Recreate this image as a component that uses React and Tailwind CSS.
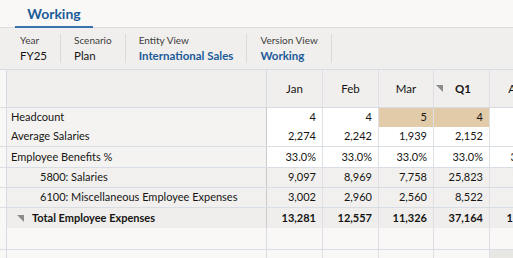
import React from 'react'

const font = { fontFamily: 'Lato, "Noto Sans", sans-serif' }

function Tri({ className }) {
    return (
        <svg width="7" height="7" viewBox="0 0 7 7" className={className}>
            <polygon points="0,0 7,0 7,7" fill="#8c8c8c" />
        </svg>
    )
}

const povItems = [
    { label: 'Year', value: 'FY25' },
    { label: 'Scenario', value: 'Plan' },
    { label: 'Entity View', value: 'International Sales', link: true },
    { label: 'Version View', value: 'Working', link: true },
]

const cols = [
    { name: 'Jan', w: 'w-[56px]', pr: 'pr-[6px]' },
    { name: 'Feb', w: 'w-[56px]', pr: 'pr-[6px]' },
    { name: 'Mar', w: 'w-[55px]', pr: 'pr-[6px]' },
    { name: 'Q1', w: 'w-[56px]', pr: 'pr-[6px]', bold: true },
    { name: 'Apr', w: 'w-[56px]', pr: 'pr-[4px]' },
]

const rows = [
    { label: 'Headcount', vals: ['4', '4', '5', '4', '4'], h: 'h-[19px]', labelBg: 'bg-[#f4f3f1]', cellBg: 'bg-white', tan: [2, 3] },
    { label: 'Average Salaries', vals: ['2,274', '2,242', '1,939', '2,152', '2,263'], h: 'h-[20px]', labelBg: 'bg-[#f4f3f1]', cellBg: 'bg-white', border: true },
    { label: 'Employee Benefits %', vals: ['33.0%', '33.0%', '33.0%', '33.0%', '33.0%'], h: 'h-[21px]', labelBg: 'bg-[#f4f3f1]', cellBg: 'bg-white', border: true },
    { label: '5800: Salaries', vals: ['9,097', '8,969', '7,758', '25,823', '9,041'], h: 'h-[20px]', labelBg: 'bg-[#f1f0ee]', cellBg: 'bg-[#f1f0ee]', border: true, indent: true },
    { label: '6100: Miscellaneous Employee Expenses', vals: ['3,002', '2,960', '2,560', '8,522', '2,983'], h: 'h-[20px]', labelBg: 'bg-[#f1f0ee]', cellBg: 'bg-[#f1f0ee]', border: true, indent: true },
    { label: 'Total Employee Expenses', vals: ['13,281', '12,557', '11,326', '37,164', '13,171'], h: 'h-[20px]', labelBg: 'bg-[#efeeec]', cellBg: 'bg-[#efeeec]', bold: true, total: true },
]

export default function App() {
    return (
        <div className="w-[513px] h-[258px] overflow-hidden bg-[#f9f8f6] text-[#161513]" style={font}>
            {/* tab bar */}
            <div className="h-[28px] border-b border-[#dedcd9] flex">
                <div className="ml-[15px] w-[78px] h-[28px] border-b-2 border-[#3a72ae] flex items-center justify-center text-[14px] font-bold text-[#1c5b99]">
                    Working
                </div>
            </div>

            {/* POV bar */}
            <div className="h-[42px] bg-[#f1efed] border-b border-[#d6dce2] flex items-center pl-[7px]">
                {povItems.map((item, i) => (
                    <div key={i} className="px-[13px] h-[29px] border-r border-[#dcdad7] flex flex-col justify-center gap-[3px]">
                        <div className="text-[10px] leading-[12px] text-[#3c3c3c] whitespace-nowrap">{item.label}</div>
                        <div className={`text-[11.5px] leading-[14px] whitespace-nowrap ${item.link ? 'font-bold text-[#1c5b99]' : ''}`}>{item.value}</div>
                    </div>
                ))}
            </div>

            {/* grid header */}
            <div className="flex h-[38px] border-b border-[#d6dce2]">
                <div className="w-[7px] shrink-0 border-r border-[#d6dce2]"></div>
                <div className="w-[260px] shrink-0 border-r border-[#d6dce2] bg-[#f1efed]"></div>
                {cols.map((c, i) => (
                    <div key={i} className={`${c.w} shrink-0 border-r border-[#dde1e6] bg-[#f1efed] flex items-center text-[11.5px] ${c.bold ? 'font-bold justify-start pl-[2px] gap-[12px]' : 'justify-center'}`}>
                        {c.bold && <Tri />}
                        <span>{c.name}</span>
                    </div>
                ))}
            </div>

            {/* grid rows */}
            {rows.map((r, ri) => (
                <div key={ri} className={`flex ${r.h} ${r.border ? 'border-b border-[#d9dee4]' : ''} text-[11px] ${r.bold ? 'font-bold' : ''}`}>
                    <div className="w-[7px] shrink-0 border-r border-[#d6dce2]"></div>
                    <div className={`w-[260px] shrink-0 border-r border-[#c9cccf] ${r.labelBg} flex items-center whitespace-nowrap ${r.indent ? 'pl-[33px]' : r.total ? 'pl-[10px]' : 'pl-[4px]'}`}>
                        {r.total && <Tri className="mr-[8px]" />}
                        {r.label}
                    </div>
                    {r.vals.map((v, vi) => (
                        <div key={vi} className={`${cols[vi].w} ${cols[vi].pr} shrink-0 border-r border-[#dde1e6] flex items-center justify-end whitespace-nowrap ${r.tan && r.tan.includes(vi) ? 'bg-[#e1cba9]' : r.cellBg}`}>
                            {v}
                        </div>
                    ))}
                </div>
            ))}

            <div className="flex h-[22px] border-b border-[#d9dee4]">
                <div className="w-[7px] shrink-0 border-r border-[#d6dce2]"></div>
                <div className="w-[260px] shrink-0 border-r border-[#d6dce2]"></div>
                {cols.map((c, i) => (
                    <div key={i} className={`${c.w} shrink-0 border-r border-[#dde1e6]`}></div>
                ))}
            </div>
            <div className="flex h-[12px]">
                <div className="w-[7px] shrink-0 border-r border-[#d6dce2]"></div>
                <div className="w-[260px] shrink-0 border-r border-[#d6dce2]"></div>
                {cols.map((c, i) => (
                    <div key={i} className={`${c.w} shrink-0 border-r border-[#dde1e6] ${i === 4 ? 'bg-[#e9e7e4]' : ''}`}></div>
                ))}
            </div>
        </div>
    )
}
